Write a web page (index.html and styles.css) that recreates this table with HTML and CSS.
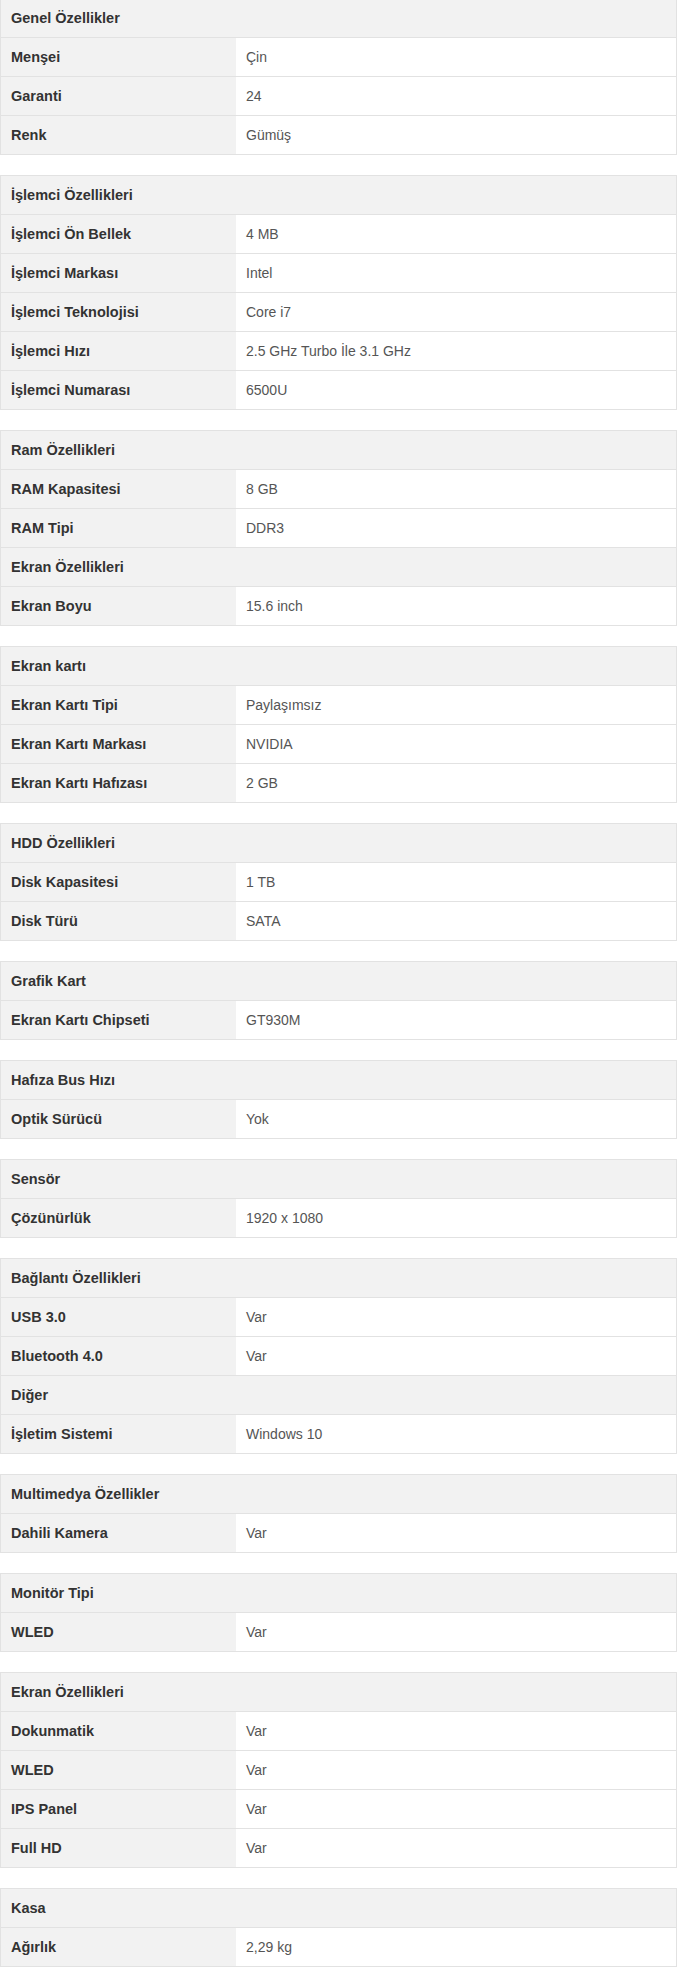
FILE: index.html
```html
<!DOCTYPE html>
<html lang="tr">
<head>
<meta charset="utf-8">
<title>Teknik Özellikler</title>
<link rel="stylesheet" href="styles.css">
</head>
<body>
<div class="specs">
  <div class="spec">
    <div class="row head"><span class="label">Genel Özellikler</span></div>
    <div class="row"><span class="label">Menşei</span><span class="value">Çin</span></div>
    <div class="row"><span class="label">Garanti</span><span class="value">24</span></div>
    <div class="row"><span class="label">Renk</span><span class="value">Gümüş</span></div>
  </div>
  <div class="spec">
    <div class="row head"><span class="label">İşlemci Özellikleri</span></div>
    <div class="row"><span class="label">İşlemci Ön Bellek</span><span class="value">4 MB</span></div>
    <div class="row"><span class="label">İşlemci Markası</span><span class="value">Intel</span></div>
    <div class="row"><span class="label">İşlemci Teknolojisi</span><span class="value">Core i7</span></div>
    <div class="row"><span class="label">İşlemci Hızı</span><span class="value">2.5 GHz Turbo İle 3.1 GHz</span></div>
    <div class="row"><span class="label">İşlemci Numarası</span><span class="value">6500U</span></div>
  </div>
  <div class="spec">
    <div class="row head"><span class="label">Ram Özellikleri</span></div>
    <div class="row"><span class="label">RAM Kapasitesi</span><span class="value">8 GB</span></div>
    <div class="row"><span class="label">RAM Tipi</span><span class="value">DDR3</span></div>
    <div class="row head"><span class="label">Ekran Özellikleri</span></div>
    <div class="row"><span class="label">Ekran Boyu</span><span class="value">15.6 inch</span></div>
  </div>
  <div class="spec">
    <div class="row head"><span class="label">Ekran kartı</span></div>
    <div class="row"><span class="label">Ekran Kartı Tipi</span><span class="value">Paylaşımsız</span></div>
    <div class="row"><span class="label">Ekran Kartı Markası</span><span class="value">NVIDIA</span></div>
    <div class="row"><span class="label">Ekran Kartı Hafızası</span><span class="value">2 GB</span></div>
  </div>
  <div class="spec">
    <div class="row head"><span class="label">HDD Özellikleri</span></div>
    <div class="row"><span class="label">Disk Kapasitesi</span><span class="value">1 TB</span></div>
    <div class="row"><span class="label">Disk Türü</span><span class="value">SATA</span></div>
  </div>
  <div class="spec">
    <div class="row head"><span class="label">Grafik Kart</span></div>
    <div class="row"><span class="label">Ekran Kartı Chipseti</span><span class="value">GT930M</span></div>
  </div>
  <div class="spec">
    <div class="row head"><span class="label">Hafıza Bus Hızı</span></div>
    <div class="row"><span class="label">Optik Sürücü</span><span class="value">Yok</span></div>
  </div>
  <div class="spec">
    <div class="row head"><span class="label">Sensör</span></div>
    <div class="row"><span class="label">Çözünürlük</span><span class="value">1920 x 1080</span></div>
  </div>
  <div class="spec">
    <div class="row head"><span class="label">Bağlantı Özellikleri</span></div>
    <div class="row"><span class="label">USB 3.0</span><span class="value">Var</span></div>
    <div class="row"><span class="label">Bluetooth 4.0</span><span class="value">Var</span></div>
    <div class="row head"><span class="label">Diğer</span></div>
    <div class="row"><span class="label">İşletim Sistemi</span><span class="value">Windows 10</span></div>
  </div>
  <div class="spec">
    <div class="row head"><span class="label">Multimedya Özellikler</span></div>
    <div class="row"><span class="label">Dahili Kamera</span><span class="value">Var</span></div>
  </div>
  <div class="spec">
    <div class="row head"><span class="label">Monitör Tipi</span></div>
    <div class="row"><span class="label">WLED</span><span class="value">Var</span></div>
  </div>
  <div class="spec">
    <div class="row head"><span class="label">Ekran Özellikleri</span></div>
    <div class="row"><span class="label">Dokunmatik</span><span class="value">Var</span></div>
    <div class="row"><span class="label">WLED</span><span class="value">Var</span></div>
    <div class="row"><span class="label">IPS Panel</span><span class="value">Var</span></div>
    <div class="row"><span class="label">Full HD</span><span class="value">Var</span></div>
  </div>
  <div class="spec">
    <div class="row head"><span class="label">Kasa</span></div>
    <div class="row"><span class="label">Ağırlık</span><span class="value">2,29 kg</span></div>
  </div>
</div>
</body>
</html>
```
FILE: styles.css
```css
html, body {
  margin: 0;
  padding: 0;
  background: #ffffff;
}

body {
  font-family: "Liberation Sans", Arial, sans-serif;
  color: #333333;
}

.specs {
  display: flex;
  flex-direction: column;
  gap: 20px;
  margin-top: -2px;
  width: 677px;
}

.spec {
  border: 1px solid #e2e2e2;
  border-bottom: none;
  box-sizing: border-box;
  width: 677px;
}

.row {
  display: grid;
  grid-template-columns: 235px 1fr;
  height: 38px;
  border-bottom: 1px solid #e2e2e2;
}

.row.head {
  grid-template-columns: 1fr;
  background: #f2f2f2;
}

.label {
  display: flex;
  align-items: center;
  padding-left: 10px;
  background: #f2f2f2;
  font-weight: bold;
  font-size: 14.5px;
  color: #333333;
  white-space: nowrap;
}

.value {
  display: flex;
  align-items: center;
  padding-left: 10px;
  background: #ffffff;
  font-size: 14px;
  color: #555555;
  white-space: nowrap;
}
```
